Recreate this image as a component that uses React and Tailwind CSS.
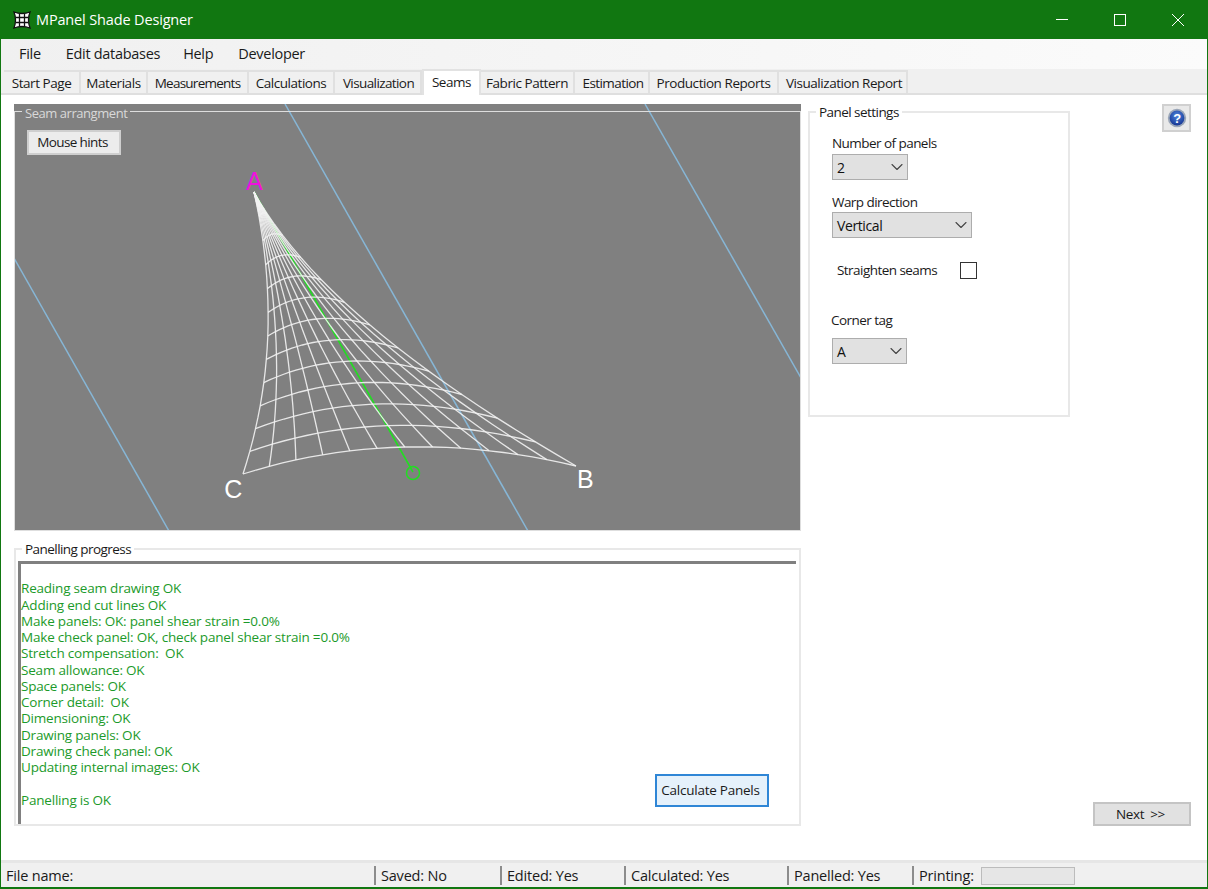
import React from "react";
import { ChevronDown } from "lucide-react";

const tabs = [
  ["Start Page", "w-[77px]"],
  ["Materials", "w-[67px]"],
  ["Measurements", "w-[101px] tracking-[-0.75px]"],
  ["Calculations", "w-[86px]"],
  ["Visualization", "w-[87px] tracking-[-0.6px] pl-[2px]"],
  ["Seams", "w-[59px]"],
  ["Fabric Pattern", "w-[94px]"],
  ["Estimation", "w-[75px] tracking-[-0.6px] pl-[3px]"],
  ["Production Reports", "w-[129px]"],
  ["Visualization Report", "w-[129px] pl-[3px]"],
];

const progress = [
  "Reading seam drawing OK",
  "Adding end cut lines OK",
  "Make panels: OK: panel shear strain =0.0%",
  "Make check panel: OK, check panel shear strain =0.0%",
  "Stretch compensation:  OK",
  "Seam allowance: OK",
  "Space panels: OK",
  "Corner detail:  OK",
  "Dimensioning: OK",
  "Drawing panels: OK",
  "Drawing check panel: OK",
  "Updating internal images: OK",
  "",
  "Panelling is OK",
];

const A = [254, 192];
const B = [576, 466];
const C = [243, 474];
const ctrlAC = [287, 339];
const ctrlAB = [325, 321];
const sag = [-9.5, -46];

function quad(p0, c, p1, t) {
  const s = 1 - t;
  return [
    s * s * p0[0] + 2 * s * t * c[0] + t * t * p1[0],
    s * s * p0[1] + 2 * s * t * c[1] + t * t * p1[1],
  ];
}

// point on the sail: v = 0 on the C-B edge, v = 1 at A
function sail(u, v) {
  const left = quad(C, ctrlAC, A, v);
  const right = quad(B, ctrlAB, A, v);
  const c = [
    (left[0] + right[0]) / 2 + sag[0] * (1 - v),
    (left[1] + right[1]) / 2 + sag[1] * (1 - v),
  ];
  return quad(left, c, right, u);
}

function polyline(fn) {
  const pts = [];
  for (let i = 0; i <= 24; i++) {
    const p = fn(i / 24);
    pts.push(p[0].toFixed(1) + "," + p[1].toFixed(1));
  }
  return pts.join(" ");
}

function Sail() {
  const rows = [];
  for (let k = 0; k <= 15; k++) rows.push(k < 11 ? k / 12 : 11 / 12 + (k - 11) / 60);
  const fans = [];
  for (let k = 0; k <= 12; k++) fans.push(k / 12);
  return (
    <svg className="absolute left-0 top-0" width="787" height="427" viewBox="14 104 787 427">
      <g stroke="#86b6d6" strokeWidth="1.5" fill="none">
        <line x1="285" y1="104" x2="528" y2="531" />
        <line x1="645" y1="104" x2="801" y2="378" />
        <line x1="14" y1="258" x2="169" y2="531" />
      </g>
      <line x1="254" y1="192" x2="413" y2="472" stroke="#22dd22" strokeWidth="1.6" />
      <circle cx="413" cy="473" r="6.5" fill="none" stroke="#22dd22" strokeWidth="1.5" />
      <g stroke="#f2f2f2" strokeWidth="1.3" fill="none" strokeOpacity="0.9">
        {rows.map((v, i) => (
          <polyline key={i} points={polyline((u) => sail(u, v))} />
        ))}
        {fans.map((u, i) => (
          <polyline key={i} points={polyline((t) => sail(u, t))} />
        ))}
      </g>
      <g fontFamily="'Liberation Sans', Arial, sans-serif" fontSize="25" textAnchor="middle">
        <text x="254" y="190" fill="#f010e0">A</text>
        <text x="233" y="498" fill="#ffffff">C</text>
        <text x="585" y="488" fill="#ffffff">B</text>
      </g>
    </svg>
  );
}

function Logo() {
  return (
    <svg width="18" height="18" viewBox="0 0 18 18" className="mr-[5px]">
      <path d="M1 1 Q9 4 17 1 Q14 9 17 17 Q9 14 1 17 Q4 9 1 1 Z" fill="#ffffff" stroke="#111111" strokeWidth="1.3" />
      <path d="M6.5 3 L6.5 15 M11.5 3 L11.5 15 M3 6.5 L15 6.5 M3 11.5 L15 11.5" stroke="#111111" strokeWidth="1.3" fill="none" />
    </svg>
  );
}

function HelpIcon() {
  return (
    <svg width="20" height="20" viewBox="0 0 20 20">
      <defs>
        <radialGradient id="helpFill" cx="50%" cy="35%" r="70%">
          <stop offset="0%" stopColor="#4f86dd" />
          <stop offset="100%" stopColor="#12308f" />
        </radialGradient>
      </defs>
      <circle cx="10" cy="10" r="9.2" fill="#9aa6b8" />
      <circle cx="10" cy="10" r="7.4" fill="url(#helpFill)" />
      <text x="10" y="15" textAnchor="middle" fontSize="13" fontWeight="700" fill="#ffffff" fontFamily="'Liberation Sans', sans-serif">?</text>
    </svg>
  );
}

function Select({ value, className }) {
  return (
    <div className={"flex h-[26px] items-center justify-between border border-[#adadad] bg-[#e1e1e1] pl-[4px] text-[14px] tracking-[-0.4px] text-[#111] " + className}>
      <span className="pt-[1px]">{value}</span>
      <ChevronDown size={20} strokeWidth={1.3} className="text-[#444]" />
    </div>
  );
}

function StatusCell({ className, children }) {
  return (
    <div className={"flex h-[19px] items-center border-l-2 border-[#8c8c8c] pl-[5px] " + className}>
      {children}
    </div>
  );
}

export default function App() {
  return (
    <div className="flex h-[889px] w-[1208px] flex-col overflow-hidden border-x border-b-2 border-[#117711] bg-white font-['Open_Sans','Noto_Sans',sans-serif] text-[13.5px] tracking-[-0.55px] text-[#1a1a1a]">
      {/* title bar */}
      <div className="flex h-[39px] shrink-0 items-center bg-[#117711] pl-[12px] text-white">
        <Logo />
        <span className="text-[14.5px] tracking-[-0.15px]">MPanel Shade Designer</span>
        <div className="ml-auto flex items-center">
          <div className="flex w-[58px] justify-center"><span className="h-px w-[12px] bg-white" /></div>
          <div className="flex w-[58px] justify-center"><span className="h-[12px] w-[12px] border border-white" /></div>
          <div className="flex w-[58px] justify-center">
            <svg width="12" height="12" viewBox="0 0 12 12" stroke="#ffffff" strokeWidth="1">
              <path d="M0 0 L12 12 M12 0 L0 12" />
            </svg>
          </div>
        </div>
      </div>

      {/* menu */}
      <div className="flex h-[30px] shrink-0 items-center bg-linear-to-r from-[#f0f0f0] to-[#fbfbfb] pl-[18px] text-[14.5px] tracking-[-0.3px]">
        <span className="mr-[25px]">File</span>
        <span className="mr-[23px]">Edit databases</span>
        <span className="mr-[25px]">Help</span>
        <span>Developer</span>
      </div>

      {/* tabs */}
      <div className="flex h-[26px] shrink-0 items-end border-b-2 border-[#dfdfdf] bg-[#f0f0f0] pl-[3px] tracking-[-0.45px]">
        {tabs.map(([name, w]) =>
          name === "Seams" ? (
            <div key={name} className={"-mb-[2px] flex h-[26px] items-start justify-center border-x-2 border-t-2 border-[#e2e2e2] bg-white pt-[1px] " + w}>
              {name}
            </div>
          ) : (
            <div key={name} className={"flex h-[23px] items-center justify-center border-r-2 border-t-2 border-[#e0e0e0] pt-[2px] " + w}>
              {name}
            </div>
          ),
        )}
      </div>

      {/* page */}
      <div className="flex min-h-0 flex-1 pl-[13px] pt-[9px]">
        <div className="flex w-[787px] shrink-0 flex-col">
          <div className="relative h-[427px] shrink-0 bg-[#808080]">
            <Sail />
            <div className="absolute inset-x-0 bottom-0 top-[7px] border border-[#dedede]" />
            <div className="absolute left-[8px] top-0 bg-[#808080] px-[3px] text-[13px] leading-[18px] tracking-[-0.45px] text-[#d9d9d9]">Seam arrangment</div>
            <button className="absolute left-[13px] top-[26px] h-[25px] w-[94px] border-2 border-[#cfcfcf] bg-[#ececec] pr-[3px] tracking-[-0.6px]">Mouse hints</button>
          </div>

          <div className="relative mt-[17px] flex h-[278px] w-[787px] shrink-0 flex-col border-2 border-[#e8e8e8] pl-[2px] pr-[3px] pt-[11px]">
            <div className="absolute -top-[10px] left-[6px] bg-white px-[3px] leading-[18px]">Panelling progress</div>
            <div className="flex min-h-0 flex-1 items-end justify-between border-l-[3px] border-t-[3px] border-[#808080] pr-[27px]">
              <div className="mb-[16px] whitespace-pre leading-[16.27px] tracking-[-0.2px] text-[#1c9a2a]">
                {progress.map((line, i) => (
                  <div key={i} className="h-[16.27px]">{line}</div>
                ))}
              </div>
              <button className="mb-[17px] h-[33px] w-[114px] border-2 border-[#2f86d6] bg-[#e5f1fb] pr-[3px] tracking-[-0.25px]">Calculate Panels</button>
            </div>
          </div>
        </div>

        <div className="ml-[7px] flex flex-1 flex-col pb-[34px] pr-[16px]">
          <div className="flex items-start justify-between">
            <div className="relative mt-[7px] flex h-[306px] w-[262px] flex-col border-2 border-[#e8e8e8] pl-[22px] pt-[20px]">
              <div className="absolute -top-[10px] left-[6px] bg-white px-[3px] leading-[18px]">Panel settings</div>
              <div className="mb-[1px] leading-[20px]">Number of panels</div>
              <Select value="2" className="w-[76px]" />
              <div className="mt-[12px] leading-[20px]">Warp direction</div>
              <Select value="Vertical" className="w-[140px]" />
              <div className="mt-[24px] flex h-[17px] items-center pl-[5px]">
                <span className="w-[123px]">Straighten seams</span>
                <span className="h-[17px] w-[17px] border-[1.5px] border-[#333]" />
              </div>
              <div className="-ml-[1px] mt-[31px] leading-[20px]">Corner tag</div>
              <Select value="A" className="mt-[8px] w-[75px]" />
            </div>
            <div className="flex h-[28px] w-[29px] items-center justify-center border-2 border-[#d0d0d0] bg-[#e9e9e9]">
              <HelpIcon />
            </div>
          </div>
          <button className="mt-auto h-[24px] w-[98px] self-end border-2 border-[#c4c4c4] bg-[#e1e1e1] pr-[3px] tracking-[-0.4px]">Next &nbsp;&gt;&gt;</button>
        </div>
      </div>

      {/* status bar */}
      <div className="flex h-[27px] shrink-0 items-center border-t-[3px] border-[#e6e6e6] bg-[#f0f0f0] pl-[5px] pt-[1px] text-[14.5px] tracking-[-0.2px]">
        <div className="w-[368px]">File name:</div>
        <StatusCell className="w-[126px]">Saved: No</StatusCell>
        <StatusCell className="w-[124px]">Edited: Yes</StatusCell>
        <StatusCell className="w-[163px]">Calculated: Yes</StatusCell>
        <StatusCell className="w-[125px]">Panelled: Yes</StatusCell>
        <StatusCell className="w-[69px]">Printing:</StatusCell>
        <div className="h-[18px] w-[94px] border border-[#bcbcbc] bg-[#e6e6e6]" />
      </div>
    </div>
  );
}
